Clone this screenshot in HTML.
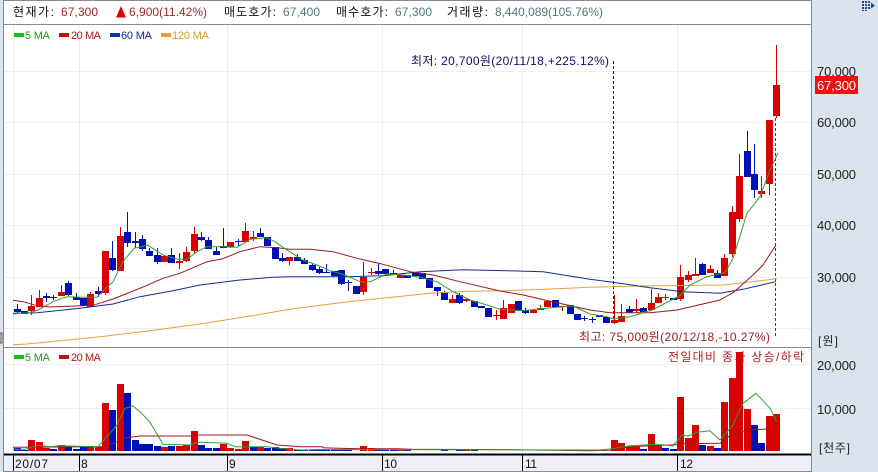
<!DOCTYPE html>
<html><head><meta charset="utf-8">
<style>
html,body{margin:0;padding:0;background:#dbe4ee;width:878px;height:472px;overflow:hidden}
svg{display:block}
text{font-family:"Liberation Sans","Noto Sans CJK KR",sans-serif;font-size:12px}
</style></head>
<body>
<svg width="878" height="472" viewBox="0 0 878 472" xmlns="http://www.w3.org/2000/svg">
<rect width="878" height="472" fill="#dbe4ee"/>
<rect x="3" y="0" width="809" height="472" fill="#fff"/>
<rect x="4" y="455" width="807" height="16" fill="#eeeef6"/>
<!-- grid -->
<g stroke="#efefef" stroke-width="1" fill="none" shape-rendering="crispEdges">
<path d="M13.5 25V347M79.5 25V347M227.5 25V347M382.5 25V347M522.5 25V347M677.5 25V347"/>
<path d="M13.5 348V454M79.5 348V454M227.5 348V454M382.5 348V454M522.5 348V454M677.5 348V454"/>
<path d="M4 71.5H811M4 122.5H811M4 174.5H811M4 225.5H811M4 277.5H811M4 328.5H811M4 364.5H811M4 408.5H811"/>
</g>
<!-- frame -->
<g fill="none" stroke="#8a8a8a" shape-rendering="crispEdges">
<path d="M3.5 0V472M811.5 0V472M3 0.5H812M3 24.5H812M3 347.5H812M3 471.5H812"/>
</g>
<rect x="0" y="333" width="2" height="10" fill="#e6e6ee" stroke="#555" stroke-width="1"/>
<path d="M4 454.5H811" stroke="#000" stroke-width="2"/>
<path d="M13.5 455V471M79.5 455V471M227.5 455V471M382.5 455V471M522.5 455V471M677.5 455V471" stroke="#000" shape-rendering="crispEdges"/>
<!-- header -->
<text x="13" y="16" textLength="41" fill="#111">현재가:</text>
<text x="61" y="16" textLength="37" fill="#9c2a2a">67,300</text>
<path d="M116 17.5L121 6L126 17.5Z" fill="#e00000"/>
<text x="129" y="16" textLength="78" fill="#9c2a2a">6,900(11.42%)</text>
<text x="224" y="16" textLength="52" fill="#111">매도호가:</text>
<text x="283" y="16" textLength="37" fill="#4c7a78">67,400</text>
<text x="336" y="16" textLength="52" fill="#111">매수호가:</text>
<text x="395" y="16" textLength="37" fill="#4c7a78">67,300</text>
<text x="447" y="16" textLength="41" fill="#111">거래량:</text>
<text x="495" y="16" textLength="108" fill="#4c7a78">8,440,089(105.76%)</text>
<!-- legend -->
<g shape-rendering="crispEdges">
<rect x="14" y="33" width="10" height="4" fill="#10c010"/>
<rect x="59" y="33" width="10" height="4" fill="#c01010"/>
<rect x="110" y="33" width="10" height="4" fill="#1030b0"/>
<rect x="161" y="33" width="10" height="4" fill="#f0a020"/>
</g>
<g style="font-size:11px">
<text x="25" y="39" textLength="25" style="font-size:11px" fill="#20a020">5 MA</text>
<text x="71" y="39" textLength="30" style="font-size:11px" fill="#b01818">20 MA</text>
<text x="121" y="39" textLength="31" style="font-size:11px" fill="#102a90">60 MA</text>
<text x="172" y="39" textLength="37" style="font-size:11px" fill="#e09a28">120 MA</text>
</g>
<!-- annotation -->
<text x="411" y="65" textLength="198" fill="#101060">최저: 20,700원(20/11/18,+225.12%)</text>
<path d="M613.5 61V322" stroke="#101060" stroke-dasharray="3 2" shape-rendering="crispEdges"/>
<path d="M775.5 118V337" stroke="#b01010" stroke-dasharray="3 2" shape-rendering="crispEdges"/>
<text x="579" y="341" textLength="191" fill="#9c2020">최고: 75,000원(20/12/18,-10.27%)</text>
<!-- candles wicks -->
<path fill="none" stroke="#d00000" shape-rendering="crispEdges" d="M31.5 295V315M39.5 290V307M61.5 285V296M90.5 292V307M105.5 251V295M120.5 227V271M179.5 253V269M186.5 247V262M194.5 227V253M230.5 242V248M245.5 223V242M253.5 231V241M289.5 257V265M363.5 262V295M371.5 268V275M452.5 295V303M466.5 298V302M496.5 310V320M503.5 300V319M540.5 305V310M562.5 306V311M614.5 295V324M621.5 304V322M636.5 299V313M651.5 289V310M658.5 293V303M665.5 294V300M680.5 265V301M688.5 271V282M695.5 258V276M710.5 265V273M724.5 254V276M732.5 206V257M739.5 154V222M761.5 176V198M769.5 120V195M776.5 45V118"/>
<path fill="none" stroke="#0010b0" shape-rendering="crispEdges" d="M17.5 304V313M46.5 293V302M53.5 295V300M68.5 281V296M76.5 293V300M98.5 287V297M112.5 241V271M127.5 212V247M135.5 232V248M142.5 235V251M149.5 248V256M157.5 248V264M171.5 248V263M201.5 232V241M208.5 237V249M216.5 247V255M223.5 228V248M238.5 239V246M260.5 228V237M282.5 253V262M297.5 254V261M304.5 258V264M312.5 263V271M319.5 267V274M326.5 264V273M341.5 270V285M348.5 280V291M378.5 263V275M393.5 270V275M437.5 287V296M444.5 291V300M459.5 293V304M525.5 308V314M584.5 316V321M592.5 317V323M629.5 306V313M643.5 307V313M702.5 263V275M717.5 270V278M747.5 131V177M754.5 144V198"/>
<!-- candle bodies -->
<path fill="#d80000" d="M28 306h7v5h-7zM36 298h7v9h-7zM58 292h7v4h-7zM87 294h7v13h-7zM102 251h7v42h-7zM117 236h7v35h-7zM161 256h7v6h-7zM176 261h7v2h-7zM183 252h7v9h-7zM191 234h7v17h-7zM227 242h7v5h-7zM242 231h7v11h-7zM250 237h7v2h-7zM286 257h7v4h-7zM360 277h7v15h-7zM368 272h7v1h-7zM397 275h7v3h-7zM449 299h7v4h-7zM463 299h7v2h-7zM493 315h7v1h-7zM500 308h7v11h-7zM508 304h7v9h-7zM530 310h7v3h-7zM537 308h7v2h-7zM544 301h7v6h-7zM559 306h7v1h-7zM611 320h7v3h-7zM618 316h7v6h-7zM633 309h7v2h-7zM648 303h7v7h-7zM655 297h7v6h-7zM662 297h7v1h-7zM677 277h7v22h-7zM685 275h7v5h-7zM692 274h7v2h-7zM707 269h7v4h-7zM721 258h7v18h-7zM729 212h7v42h-7zM736 176h7v43h-7zM758 191h7v3h-7zM766 120h7v64h-7zM773 85h7v31h-7z"/>
<path fill="#0010b8" d="M14 309h7v3h-7zM21 311h7v3h-7zM43 296h7v2h-7zM50 297h7v1h-7zM65 283h7v12h-7zM73 297h7v3h-7zM80 298h7v8h-7zM95 291h7v3h-7zM109 258h7v12h-7zM124 232h7v11h-7zM132 241h7v2h-7zM139 239h7v10h-7zM146 251h7v5h-7zM154 255h7v7h-7zM168 255h7v8h-7zM198 237h7v3h-7zM205 240h7v9h-7zM213 251h7v4h-7zM220 246h7v2h-7zM235 241h7v1h-7zM257 233h7v4h-7zM264 237h7v9h-7zM272 247h7v12h-7zM279 258h7v3h-7zM294 257h7v4h-7zM301 260h7v4h-7zM309 265h7v5h-7zM316 269h7v4h-7zM323 272h7v1h-7zM331 271h7v5h-7zM338 270h7v14h-7zM345 282h7v1h-7zM353 286h7v8h-7zM375 271h7v3h-7zM382 269h7v5h-7zM390 273h7v1h-7zM404 275h7v3h-7zM412 272h7v4h-7zM419 273h7v6h-7zM426 278h7v10h-7zM434 287h7v4h-7zM441 292h7v8h-7zM456 295h7v8h-7zM471 301h7v6h-7zM478 306h7v2h-7zM485 308h7v9h-7zM515 301h7v10h-7zM522 310h7v3h-7zM552 300h7v7h-7zM567 305h7v9h-7zM574 314h7v6h-7zM581 318h7v1h-7zM589 319h7v1h-7zM596 315h7v2h-7zM603 317h7v6h-7zM626 309h7v4h-7zM640 308h7v4h-7zM670 298h7v2h-7zM699 264h7v11h-7zM714 273h7v5h-7zM744 151h7v26h-7zM751 174h7v16h-7z"/>
<!-- moving averages price -->
<g fill="none" stroke-width="1" stroke-linejoin="round">
<polyline stroke="#e8a040" points="13,344.7 27,344 60,340.7 100,336.7 150,330.7 200,324 250,316 290,309.3 320,305.3 353,301.3 387,297.7 430,293.3 470,291.3 507,290.7 557,288.7 590,287.3 640,286 723,285 750,282 777,278.7"/>
<polyline stroke="#103090" points="13,313.3 37,312.7 80,308.3 113,304 140,296.7 173,290.7 200,285 240,280 273,277.3 290,276.7 347,276.7 383,275.7 420,271.7 463,269.7 507,270.7 543,271.7 590,279.3 613,282.3 650,287.7 683,291.7 720,293.3 743,289.3 776,281.7"/>
<polyline stroke="#a01818" points="13,300.3 23,301.7 37,305.7 50,307 93,305.3 113,299 140,288.3 163,278.3 180,273.3 207,261.7 222,259 240,251.7 260,246.7 277,247.7 290,249.3 310,249.3 333,251.7 357,258.3 383,264.3 410,271.7 433,275 460,281.7 500,291 523,295 557,302.7 590,310 610,312.7 650,312.7 677,310 720,300 733,292.7 753,275 763,265 776,245"/>
<polyline stroke="#30a030" points="13,314 30,312.7 38,310 53,301.7 67,296.7 83,297.3 97,297.3 107,287 113,281.7 123,261.7 134,248.3 148,245.3 163,255 178,259.3 187,259.3 197,251.7 207,246.7 222,246.7 237,247.3 250,239.3 267,237.7 275,241.7 287,250 303,260 317,265 330,270.7 345,275 360,281.7 370,281.7 387,274 403,275 420,277.3 437,281.7 453,291.7 470,300 487,305 500,309.3 523,310.7 540,308.7 557,307.3 573,306 590,314 607,316.7 614,319 630,316.7 652,310 680,295.7 690,285 707,276.7 725,272.7 733,258.3 747,213.3 760,196.7 770,170 778,153"/>
</g>
<!-- volume panel legend -->
<g shape-rendering="crispEdges">
<rect x="14" y="355" width="10" height="4" fill="#10c010"/>
<rect x="59" y="355" width="10" height="4" fill="#c01010"/>
</g>
<text x="25" y="361" textLength="25" style="font-size:11px" fill="#20a020">5 MA</text>
<text x="71" y="361" textLength="30" style="font-size:11px" fill="#b01818">20 MA</text>
<text x="668" y="361" textLength="136" fill="#b02020">전일대비 종가 상승/하락</text>
<!-- volume bars -->
<path fill="#d80000" d="M28 440h7V451h-7zM36 442h7V451h-7zM43 448h7V451h-7zM58 445h7V451h-7zM87 446h7V451h-7zM95 447h7V451h-7zM102 403h7V451h-7zM117 384h7V451h-7zM161 447h7V451h-7zM176 446h7V451h-7zM183 445h7V451h-7zM191 431h7V451h-7zM220 444h7V451h-7zM227 448h7V451h-7zM235 449h7V451h-7zM242 441h7V451h-7zM257 447h7V451h-7zM286 448h7V451h-7zM360 446h7V451h-7zM368 448h7V451h-7zM397 450h7V451h-7zM463 450h7V451h-7zM611 440h7V451h-7zM618 443h7V451h-7zM626 447h7V451h-7zM633 446h7V451h-7zM648 434h7V451h-7zM655 446h7V451h-7zM677 397h7V451h-7zM685 438h7V451h-7zM692 425h7V451h-7zM707 446h7V451h-7zM721 402h7V451h-7zM729 378h7V451h-7zM736 352h7V451h-7zM744 409h7V451h-7zM766 416h7V451h-7zM773 414h7V451h-7z"/>
<path fill="#0010b8" d="M14 448h7V451h-7zM21 450h7V451h-7zM50 449h7V451h-7zM65 447h7V451h-7zM73 449h7V451h-7zM80 447h7V451h-7zM109 410h7V451h-7zM124 393h7V451h-7zM132 440h7V451h-7zM139 444h7V451h-7zM146 444h7V451h-7zM154 446h7V451h-7zM168 446h7V451h-7zM198 445h7V451h-7zM205 448h7V451h-7zM213 448h7V451h-7zM250 447h7V451h-7zM264 448h7V451h-7zM272 447h7V451h-7zM279 448h7V451h-7zM294 450h7V451h-7zM301 450h7V451h-7zM309 450h7V451h-7zM316 450h7V451h-7zM323 450h7V451h-7zM331 450h7V451h-7zM338 450h7V451h-7zM345 450h7V451h-7zM375 449h7V451h-7zM382 450h7V451h-7zM390 450h7V451h-7zM404 450h7V451h-7zM441 450h7V451h-7zM456 450h7V451h-7zM471 450h7V451h-7zM567 450h7V451h-7zM640 449h7V451h-7zM662 448h7V451h-7zM670 449h7V451h-7zM699 445h7V451h-7zM714 448h7V451h-7zM751 425h7V451h-7zM758 443h7V451h-7z"/>
<g fill="none" stroke-width="1" stroke-linejoin="round">
<polyline stroke="#a01818" points="13,447.3 100,446.7 113,443.3 127,437.7 140,436 190,436 197,435 247,435 277,445 300,446.7 323,446.7 323,447.7 338,448.3 360,448.7 397,448.7 412,449.3 515,449.7 590,450.7 610,450.3 630,446.7 670,445 683,443.7 720,443.3 733,433.3 750,430 767,429 773,425"/>
<polyline stroke="#30a030" points="13,449.3 25,449.3 38,445.3 50,446.7 60,445.7 77,446.3 98,446.7 110,433.3 117,425 125,408.3 133,406 140,411.7 150,422.3 163,444.3 190,445 198,442.3 227,443.3 235,446.7 267,446.7 280,448.3 300,450 320,449.5 600,450 610,449 630,445.7 657,444.3 673,446 682,435 688,436 697,432.3 710,430.7 720,440 733,425 742,404.3 756,393.3 770,408.3 777,421.7"/>
</g>
<!-- x axis -->
<text x="15" y="468" textLength="33" fill="#111">20/07</text>
<text x="81" y="468" fill="#111">8</text>
<text x="229" y="468" fill="#111">9</text>
<text x="384" y="468" textLength="13" fill="#111">10</text>
<text x="525" y="468" textLength="12" fill="#111">11</text>
<text x="680" y="468" textLength="13" fill="#111">12</text>
<!-- y axis -->
<g fill="#222">
<text x="817" y="76" textLength="39" style="font-size:13px">70,000</text>
<text x="817" y="127" textLength="39" style="font-size:13px">60,000</text>
<text x="817" y="179" textLength="39" style="font-size:13px">50,000</text>
<text x="817" y="230" textLength="39" style="font-size:13px">40,000</text>
<text x="817" y="282" textLength="39" style="font-size:13px">30,000</text>
<text x="818" y="345" textLength="20">[원]</text>
<text x="817" y="370" textLength="39" style="font-size:13px">20,000</text>
<text x="817" y="414" textLength="39" style="font-size:13px">10,000</text>
<text x="819" y="452" textLength="31">[천주]</text>
</g>
<rect x="815" y="76" width="43" height="18" fill="#f01010"/>
<text x="817" y="90" textLength="39" style="font-size:13px" fill="#fff">67,300</text>
<!-- top-right icon -->
<path fill="#1f4e8c" shape-rendering="crispEdges" d="M862 1h2v2h-2zM865 1h2v2h-2zM868 1h2v2h-2zM862 4h2v2h-2zM865 4h2v2h-2zM868 4h2v2h-2zM862 7h2v2h-2zM865 7h2v2h-2zM868 7h2v2h-2zM865 10h2v1h-2zM862 10h2v1h-2z"/>
<path fill="#1f4e8c" d="M871 2.5L875 5.5L871 8.5Z"/>
</svg>
</body></html>
